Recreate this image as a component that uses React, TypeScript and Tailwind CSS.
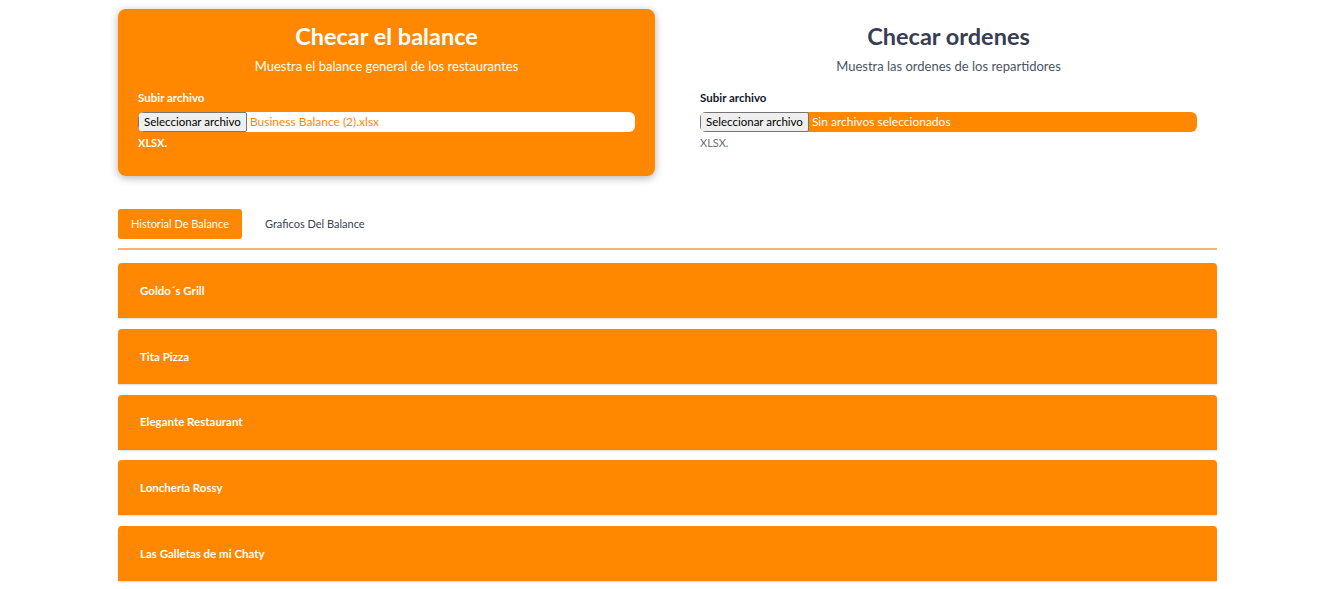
const restaurantes = [
  "Goldo´s Grill",
  "Tita Pizza",
  "Elegante Restaurant",
  "Lonchería Rossy",
  "Las Galletas de mi Chaty",
];

function FileField({ active, fileName }: { active: boolean; fileName: string }) {
  return (
    <div
      className={
        "flex items-center h-5 rounded-md overflow-hidden text-[12px] " +
        (active ? "bg-white text-[#ff8800]" : "bg-[#ff8800] text-white")
      }
    >
      <button className="h-5 px-[5px] bg-[#efefef] border border-[#767676] rounded-[2px] text-black text-[11.5px] leading-none">
        Seleccionar archivo
      </button>
      <span className="pl-[3px] leading-none">{fileName}</span>
    </div>
  );
}

function UploadCard({
  title,
  subtitle,
  active,
  fileName,
}: {
  title: string;
  subtitle: string;
  active: boolean;
  fileName: string;
}) {
  return (
    <div
      className={
        "flex-1 rounded-lg px-5 pt-3 pb-[26px] " +
        (active ? "bg-[#ff8800] text-white shadow-[0_2px_8px_rgba(0,0,0,0.3)]" : "text-[#363d54]")
      }
    >
      <h2 className="text-center text-[23.5px] font-bold leading-[30px]">{title}</h2>
      <p className={"text-center text-[13px] mt-[6px] leading-[18px] " + (active ? "" : "text-[#4b5563]")}>
        {subtitle}
      </p>
      <label className={"block text-[11.5px] font-bold mt-[16px] mb-[7px] leading-[14px] " + (active ? "" : "text-[#111827]")}>
        Subir archivo
      </label>
      <FileField active={active} fileName={fileName} />
      <p className={"text-[11px] mt-[4px] leading-[14px] " + (active ? "font-bold" : "text-[#6b7280]")}>XLSX.</p>
    </div>
  );
}

export default function App() {
  return (
    <div className="min-h-screen bg-white font-['Lato',sans-serif]">
      <div className="w-[1099px] ml-[118px] pt-[9px]">
        {/* tarjetas de carga */}
        <div className="flex gap-[25px]">
          <UploadCard
            title="Checar el balance"
            subtitle="Muestra el balance general de los restaurantes"
            active
            fileName="Business Balance (2).xlsx"
          />
          <UploadCard
            title="Checar ordenes"
            subtitle="Muestra las ordenes de los repartidores"
            active={false}
            fileName="Sin archivos seleccionados"
          />
        </div>

        {/* tabs */}
        <div className="mt-[33px] flex items-center gap-[23px] pb-[9px] border-b-2 border-[#fdb468]">
          <button className="h-[30px] px-[13px] rounded-[3px] bg-[#ff8800] text-white text-[11px]">
            Historial De Balance
          </button>
          <button className="text-[11px] text-[#374151]">Graficos Del Balance</button>
        </div>

        {/* lista de restaurantes */}
        <div className="mt-[13px] flex flex-col gap-[10.75px]">
          {restaurantes.map((r) => (
            <div
              key={r}
              className="h-[55px] flex items-center px-[22px] bg-[#ff8800] rounded-t-[4px] shadow-[0_1px_2px_rgba(0,0,0,0.15)] text-white text-[11.5px] font-bold"
            >
              {r}
            </div>
          ))}
        </div>
      </div>
    </div>
  );
}
